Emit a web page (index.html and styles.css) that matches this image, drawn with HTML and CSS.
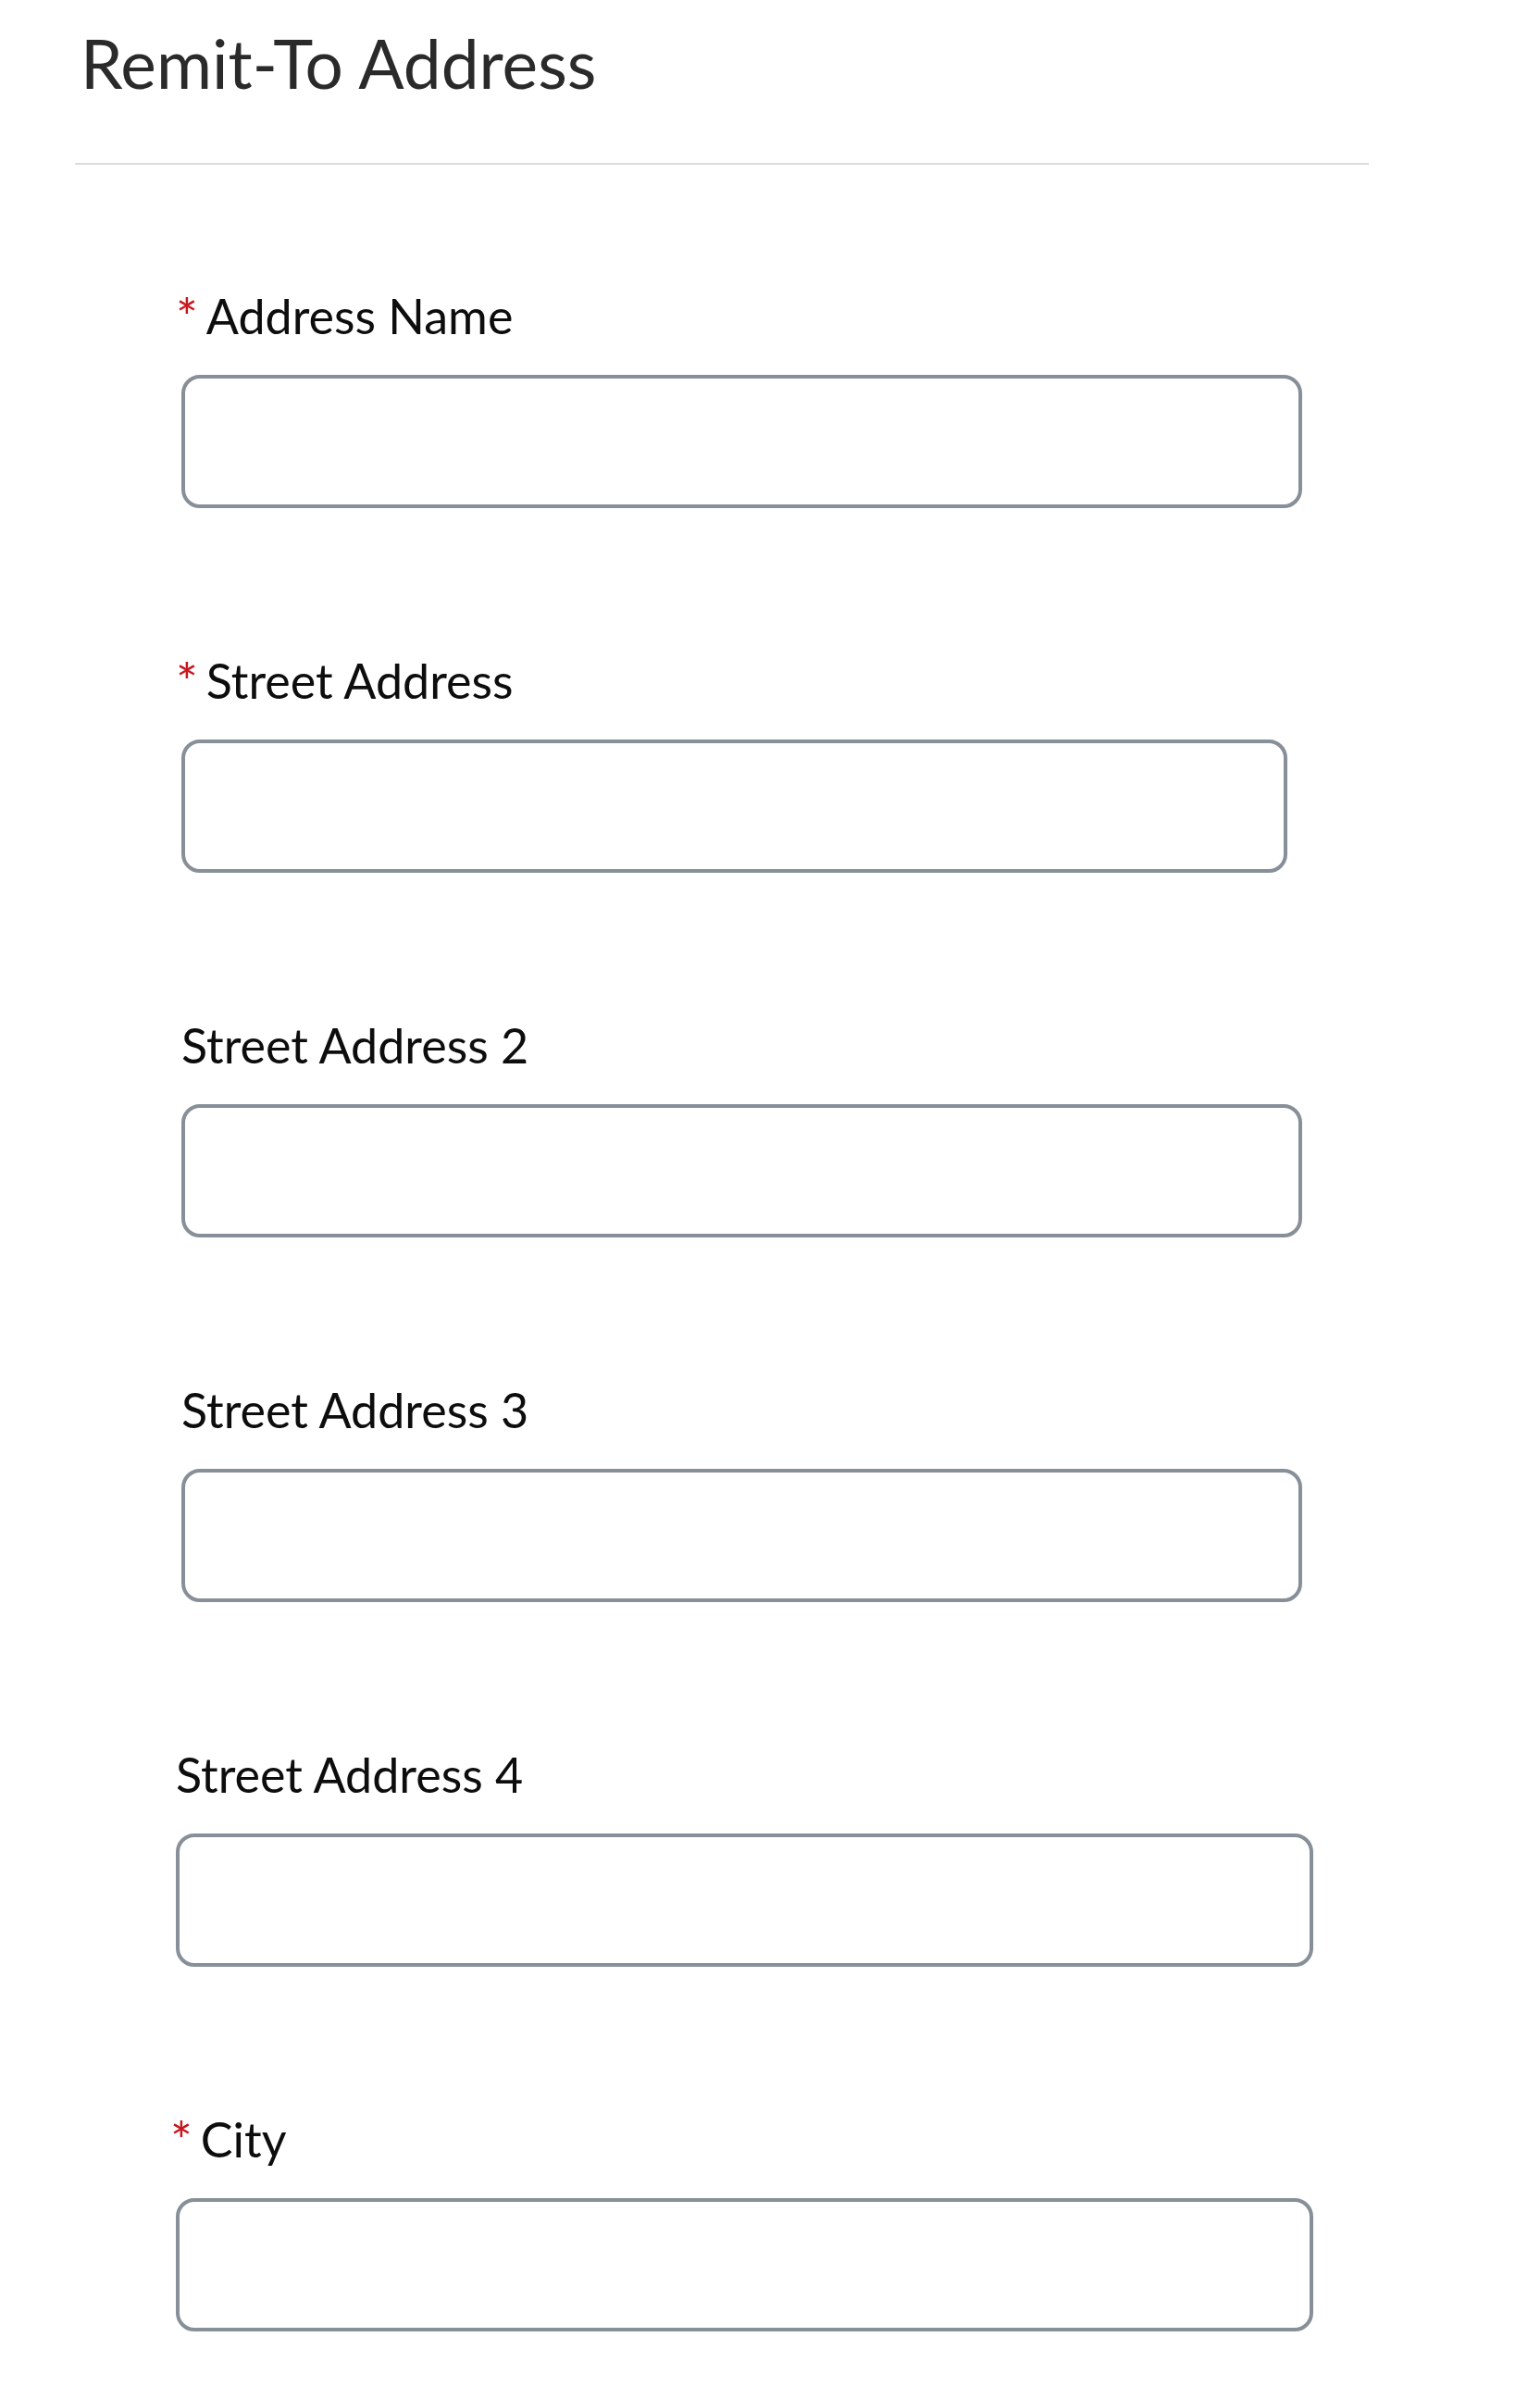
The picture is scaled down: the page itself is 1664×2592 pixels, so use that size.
FILE: index.html
```html
<!DOCTYPE html>
<html lang="en">
<head>
    <meta charset="UTF-8">
    <meta name="viewport" content="width=device-width, initial-scale=1.0">
    <title>Remit-To Address</title>
    <link rel="stylesheet" href="styles.css">
</head>
<body>
    <div class="page">
        <header class="section-header">
            <h1>Remit-To Address</h1>
        </header>

        <form class="address-form">
            <div class="field">
                <label for="address-name"><span class="required">*</span>Address Name</label>
                <input type="text" id="address-name">
            </div>

            <div class="field field-narrow">
                <label for="street-1"><span class="required">*</span>Street Address</label>
                <input type="text" id="street-1">
            </div>

            <div class="field">
                <label for="street-2">Street Address 2</label>
                <input type="text" id="street-2">
            </div>

            <div class="field">
                <label for="street-3">Street Address 3</label>
                <input type="text" id="street-3">
            </div>

            <div class="field field-wide">
                <label for="street-4">Street Address 4</label>
                <input type="text" id="street-4">
            </div>

            <div class="field field-wide">
                <label for="city"><span class="required">*</span>City</label>
                <input type="text" id="city">
            </div>
        </form>
    </div>
</body>
</html>
```

FILE: styles.css
```css
body {
    font-family: Lato, "Open Sans", sans-serif;
    margin: 0;
    padding: 0;
    background: #fff;
    color: #0d0d0d;
}

.page {
    padding-top: 24px;
}

.section-header {
    margin: 0 185px 0 81px;
    padding: 0 0 64px 6px;
    border-bottom: 2px solid #dcdcdc;
}

.section-header h1 {
    margin: 0;
    font-size: 73px;
    font-weight: 400;
    line-height: 88px;
    color: #2a2a2a;
}

.address-form {
    padding: 132px 0 0 196px;
}

.field {
    width: 1211px;
    margin-bottom: 155px;
}

.field-narrow {
    width: 1195px;
}

.field-wide {
    width: 1229px;
    margin-left: -6px;
}

.field label {
    display: block;
    font-size: 52px;
    line-height: 62px;
    margin-bottom: 33px;
}

.required {
    color: #c8161d;
    font-size: 56px;
    line-height: 1;
    vertical-align: -2px;
    margin-left: -6px;
    margin-right: 9px;
}

.field input {
    display: block;
    box-sizing: border-box;
    width: 100%;
    height: 144px;
    padding: 0 24px;
    border: 4px solid #878f98;
    border-radius: 20px;
    background: #fff;
    font: inherit;
}
```
